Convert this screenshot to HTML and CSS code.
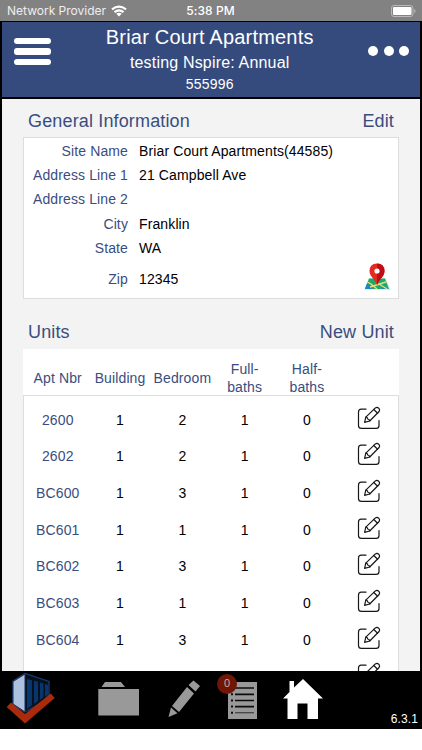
FILE: index.html
```
<!DOCTYPE html>
<html lang="en">
<head>
<meta charset="utf-8">
<title>Briar Court Apartments</title>
<link rel="stylesheet" href="styles.css">
</head>
<body>
<svg class="defs" width="0" height="0" aria-hidden="true">
  <symbol id="edit" viewBox="0 0 24 24">
    <g fill="none" stroke="#171717" stroke-width="1.2" stroke-linecap="round" stroke-linejoin="round">
      <path d="M9 3.200H4.200Q1.500 3.200 1.500 6v13.400Q1.500 22.300 4.400 22.300h14.800Q22 22.300 22 19.400V14.500"/>
      <path d="M7.600 16.300l1.200-5.200L18.400 1.900q1.700-1.200 3.300.3 1.500 1.600.4 3.300L12.700 15z"/>
      <path d="M16.800 3.500l3.800 3.700M8.800 11.100q1.900.1 1.900 1.900 1.900.1 2 2"/>
    </g>
  </symbol>
</svg>
<div class="status">
  <div class="carrier"><span>Network Provider</span>
    <svg width="16" height="12" viewBox="0 0 16 12"><g fill="none" stroke="#fff" stroke-width="2.1"><path d="M1 4.300q7-5.500 14 0M3.500 7.100q4.500-3.500 9 0"/></g><path fill="#fff" d="M5.300 8.800q2.700-2 5.400 0L8 11.500z"/></svg>
  </div>
  <span class="clock">5:38 PM</span>
  <svg class="battery" width="26" height="12" viewBox="0 0 26 12"><rect x=".5" y=".5" width="21.500" height="11" rx="2.500" fill="none" stroke="#b9b9b9"/><rect x="2" y="2" width="18.500" height="8" rx="1" fill="#fff"/><path d="M23.300 4v4q1.300-.5 1.300-2t-1.300-2" fill="#b9b9b9"/></svg>
</div>
<div class="app">
  <header>
    <div class="menu"><i></i><i></i><i></i></div>
    <div class="titles">
      <h1>Briar Court Apartments</h1>
      <p class="sub">testing Nspire: Annual</p>
      <p class="num">555996</p>
    </div>
    <div class="more"><i></i><i></i><i></i></div>
  </header>
  <main>
    <div class="heading"><h2>General Information</h2><a>Edit</a></div>
    <section class="info">
      <dl>
        <dt>Site Name</dt><dd>Briar Court Apartments(44585)</dd>
        <dt>Address Line 1</dt><dd>21 Campbell Ave</dd>
        <dt>Address Line 2</dt><dd></dd>
        <dt>City</dt><dd>Franklin</dd>
        <dt>State</dt><dd>WA</dd>
        <dt>Zip</dt><dd class="zip">12345
          <svg width="27" height="28" viewBox="0 0 27 28">
            <path fill="#d9edfa" d="M5 15h17l5 12H0z"/>
            <path fill="#20a866" d="M5 15.500h16l4 10.500H1z"/>
            <path fill="#1787ce" d="M3 20.500L9 26H1zM17 26l3-2.500 3 2.500z"/>
            <path fill="none" stroke="#eadb83" stroke-width="1.400" d="M3.500 19l3.500 2 6 5M6 24l16-5M15 21l8 5"/>
            <path fill="#e52b20" d="M13 .5Q5.500.8 5.500 8q0 3.500 3.500 7.500 3 3.500 4 6.500 1-3 4-6.500 3.500-4 3.500-7.500Q20.500.8 13 .5"/>
            <path fill="#bd0d16" d="M13 .5V22q1-3 4-6.500 3.500-4 3.500-7.500Q20.500.8 13 .5"/>
            <circle cx="13" cy="8" r="2.600" fill="#fff"/>
          </svg></dd>
      </dl>
    </section>
    <div class="heading units"><h2>Units</h2><a>New Unit</a></div>
    <div class="thead row"><span>Apt Nbr</span><span>Building</span><span>Bedroom</span><span>Full-<br>baths</span><span>Half-<br>baths</span><span></span></div>
    <div class="tbody">
      <div class="row"><b>2600</b><span>1</span><span>2</span><span>1</span><span>0</span><svg><use href="#edit"/></svg></div>
      <div class="row"><b>2602</b><span>1</span><span>2</span><span>1</span><span>0</span><svg><use href="#edit"/></svg></div>
      <div class="row"><b>BC600</b><span>1</span><span>3</span><span>1</span><span>0</span><svg><use href="#edit"/></svg></div>
      <div class="row"><b>BC601</b><span>1</span><span>1</span><span>1</span><span>0</span><svg><use href="#edit"/></svg></div>
      <div class="row"><b>BC602</b><span>1</span><span>3</span><span>1</span><span>0</span><svg><use href="#edit"/></svg></div>
      <div class="row"><b>BC603</b><span>1</span><span>1</span><span>1</span><span>0</span><svg><use href="#edit"/></svg></div>
      <div class="row"><b>BC604</b><span>1</span><span>3</span><span>1</span><span>0</span><svg><use href="#edit"/></svg></div>
      <div class="row"><b></b><span></span><span></span><span></span><span></span><svg><use href="#edit"/></svg></div>
    </div>
  </main>
</div>
<footer>
  <svg class="logo" width="50" height="53" viewBox="0 0 50 53">
    <path fill="#06101f" stroke="#153c70" stroke-width="1.300" d="M7 9L19 1.500 43 9.500v17L19 40 7 33z"/>
    <path fill="#adc0dd" stroke="#172e60" d="M7 9.500L19 2v38L7 32z"/>
    <path fill="#07366d" d="M21 7l5 1.300v25L21 37zM28 8.800l4 1V29L28 32zM34 10.500l3.500 1V25L34 28zM39 12l3 1v10l-3 2z"/>
    <path fill="#a92b0c" d="M5 30.500l14 11.500L44.700 21.500l4 4.500L19 51.500.7 35z"/>
  </svg>
  <svg class="folder" width="42" height="36" viewBox="0 0 42 36"><path fill="#999" d="M3.500 6L7 1h16l4 5zM.3 8H41v26.500H.3z"/></svg>
  <svg class="pencil" width="34" height="39" viewBox="0 0 34 39"><path fill="#999" d="M26.500 1.500L33 7l-4.500 5.500L21.500 6zM20 8l7 6.500L12 33l-7-6zM4 28.500l6.500 5.800L1.500 38z"/></svg>
  <div class="list">
    <svg width="30" height="38" viewBox="0 0 30 38"><path fill="#999" d="M0 0h29v37H0z"/><path stroke="#0c0c0c" stroke-width="1.700" d="M7 6h19M7 12.300h19M7 18.500h19M7 24.700h19"/><path stroke="#444" stroke-width="1.300" d="M7 30.700h19"/><path stroke="#0c0c0c" stroke-width="2" stroke-dasharray="2 4.150" d="M4 11.300v21"/></svg>
    <em>0</em>
  </div>
  <svg class="home" width="42" height="42" viewBox="0 0 42 42"><path fill="#fff" d="M1 20.500L7.500 14V3H12v6.500L21 1l20 19.500h-5V41H25.500V25.500h-10V41H5.500V20.500z"/></svg>
  <span class="version">6.3.1</span>
</footer>
</body>
</html>
```
FILE: styles.css
```
* { box-sizing: border-box; }
body { margin: 0; width: 422px; height: 750px; overflow: hidden; background: #fff; font: 14px/17px "Liberation Sans", Arial, sans-serif; letter-spacing: .12px; color: #000; }
h1, h2, p, dl, dd { margin: 0; font-weight: 400; }
svg { display: block; flex: none; }
.defs { position: absolute; }
.status { height: 21px; background: #828282; color: #fff; display: grid; grid-template-columns: 1fr 50px 1fr; align-items: center; padding: 0 5px 0 4px; font: 12px/21px Inter, sans-serif; }
.carrier { display: flex; align-items: center; gap: 5px; color: #eee; letter-spacing: 0; white-space: nowrap; padding-left: 3px; }
.clock { text-align: center; font-weight: 500; white-space: nowrap; letter-spacing: .1px; }
.battery { justify-self: end; }
.app { height: 650px; background: #000; padding: 1px 2px 0; }
header { height: 75px; background: #354b7e; color: #fff; display: flex; justify-content: space-between; padding: 0 11px 0 12px; }
.menu { width: 37px; padding-top: 16px; display: grid; gap: 4px; align-content: start; }
.menu i { height: 6.300px; border-radius: 3px; background: #fff; }
.titles { text-align: center; }
h1 { font-size: 20px; line-height: 24px; margin-top: 3px; letter-spacing: .2px; }
.sub { font-size: 16px; line-height: 20px; margin-top: 4px; letter-spacing: .18px; }
.num { line-height: 17px; margin-top: 3px; letter-spacing: .2px; }
.more { display: flex; gap: 5.300px; padding-top: 24px; }
.more i { width: 10px; height: 10px; background: #fff; border-radius: 50%; }
main { margin-top: 2px; height: 572px; overflow: hidden; background: #f3f3f3; padding: 10px 21px 0; }
.heading { display: flex; justify-content: space-between; padding: 0 5px; font-size: 18px; line-height: 24px; color: #3a4d80; height: 28px; letter-spacing: .15px; }
h2 { font-size: 18px; }
.info { height: 162px; border: 1px solid #ddd; background: #fff; padding-top: 1px; }
dl { display: grid; grid-template-columns: 104px 1fr; column-gap: 11px; grid-template-rows: repeat(5, 24.400px) 38px; align-items: center; }
dt { text-align: right; color: #3a4d80; }
.zip { display: flex; justify-content: space-between; align-items: center; padding-right: 7px; height: 38px; }
.zip svg { margin-top: -6px; }
.units { margin-top: 21px; height: 29px; }
.row { display: grid; grid-template-columns: repeat(6, 62.300px); justify-content: center; align-items: center; justify-items: center; text-align: center; height: 36.650px; }
.row b { font-weight: 400; color: #3a4d80; }
.row > * { margin-left: 5px; }
.row svg { width: 24px; height: 24px; margin-top: -5px; margin-left: 4px; }
.thead { height: 46px; background: #fff; color: #3a4d80; line-height: 18px; padding-top: 11px; }
.tbody { background: #fff; border: 1px solid #ddd; padding-top: 6px; height: 300px; }
footer { height: 58px; background: #000; display: flex; align-items: flex-start; color: #fff; }
.logo { margin: 1px 0 0 6px; }
.folder { margin: 10px 0 0 42px; }
.pencil { margin: 8px 0 0 27px; }
.list { position: relative; margin: 11px 0 0 27px; }
.list em { position: absolute; left: -11px; top: -8px; width: 20px; height: 20px; border-radius: 50%; background: #701606; color: #c8aaa4; font: 11px/19px "Liberation Sans", sans-serif; text-align: center; }
.home { margin: 7px 0 0 24px; }
.version { margin: 40px 4px 0 auto; font-size: 12px; line-height: 16px; }
```
